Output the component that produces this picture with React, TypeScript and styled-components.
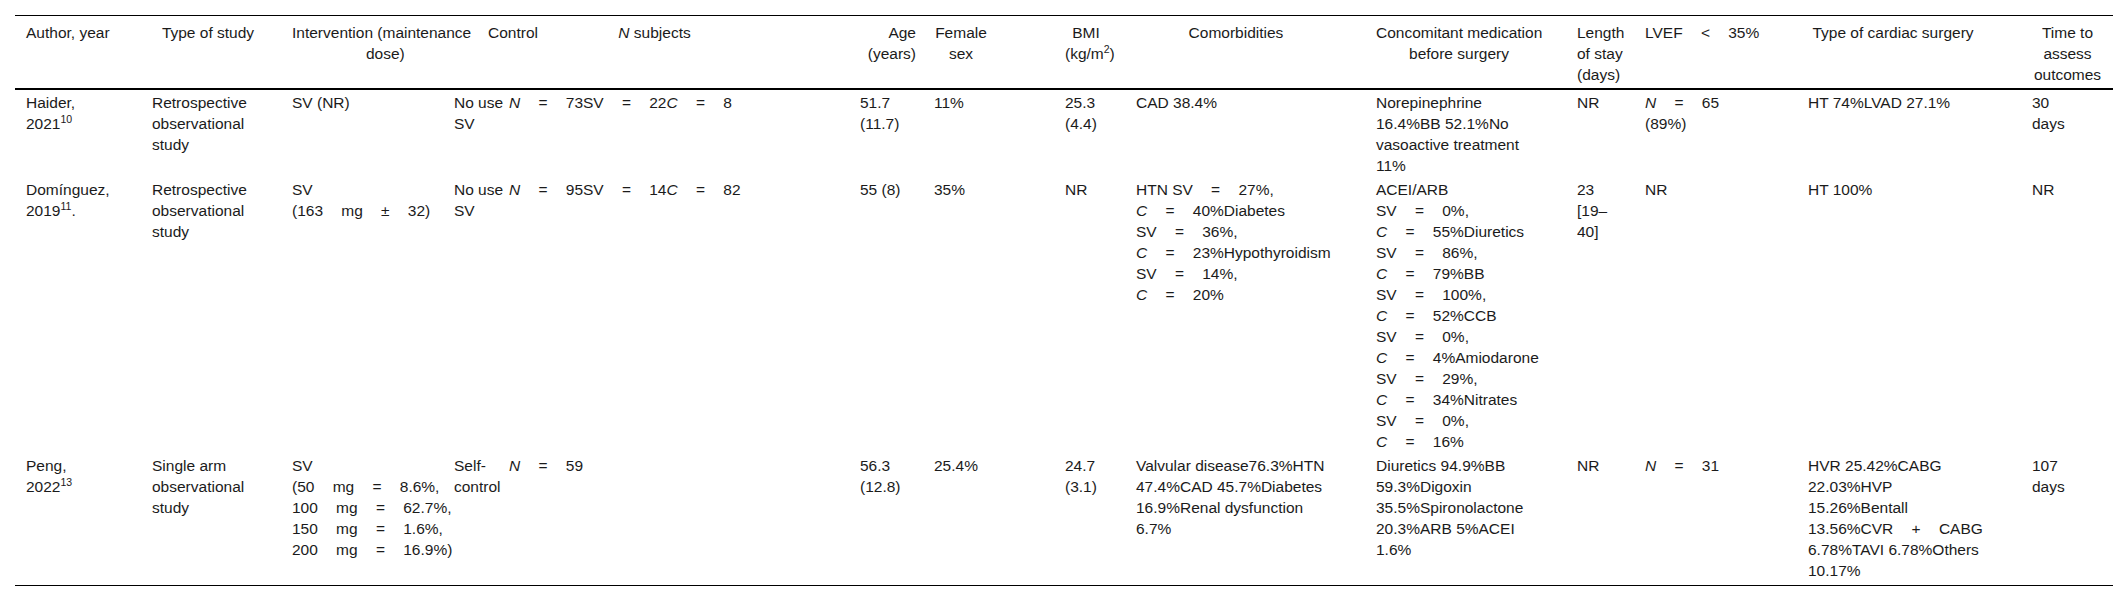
import styled, { createGlobalStyle } from 'styled-components';
import { ReactNode } from 'react';

type Align = 'left' | 'center' | 'right';

type Column = {
	width: number;
	align: Align;
	title: ReactNode;
	padLeft?: number;
	padRight?: number;
};

const GlobalStyle = createGlobalStyle`
	html, body {
		margin: 0;
		padding: 0;
		background: #ffffff;
	}

	body {
		font-family: "Liberation Sans", Arial, Helvetica, sans-serif;
		color: #1b1b1b;
	}
`;

const Page = styled.div`
	padding: 15px 0 0 15px;
`;

const Table = styled.table`
	border-collapse: collapse;
	table-layout: fixed;
	width: 2098px;
	font-size: 15.5px;
	line-height: 21px;
	border-top: 1px solid #000;
	border-bottom: 1px solid #000;
`;

const HeadRow = styled.tr`
	border-bottom: 2px solid #000;
`;

const Th = styled.th<{ $align: Align; $pl: number; $pr: number }>`
	font-weight: 400;
	text-align: ${(props) => props.$align};
	vertical-align: top;
	white-space: nowrap;
	padding: 6px ${(props) => props.$pr}px 3px ${(props) => props.$pl}px;
`;

const Td = styled.td<{ $last?: boolean }>`
	vertical-align: top;
	white-space: nowrap;
	padding: 2px 0 ${(props) => (props.$last ? '4px' : '1px')} 0;

	&:first-child {
		padding-left: 11px;
	}
`;

const V = styled.i`
	font-style: italic;
`;

// wide spacing around relations, like the math renderer in the source
const Math = styled.span`
	word-spacing: 0.9em;
`;

const Sup = styled.sup`
	font-size: 0.68em;
	line-height: 0;
	vertical-align: 0.55em;
`;

// second header line sits centred under a wider first line
const Indent = styled.span`
	padding-left: 74px;
`;

const columns: Column[] = [
	{ width: 137, align: 'left', title: 'Author, year', padLeft: 11 },
	{ width: 140, align: 'center', title: 'Type of study', padRight: 28 },
	{
		width: 162,
		align: 'left',
		title: (
			<>
				Intervention (maintenance
				<br />
				<Indent>dose)</Indent>
			</>
		)
	},
	{ width: 55, align: 'left', title: 'Control', padLeft: 34, padRight: 0 },
	{
		width: 351,
		align: 'center',
		padRight: 60,
		title: (
			<>
				<V>N</V> subjects
			</>
		)
	},
	{
		width: 74,
		align: 'right',
		padRight: 18,
		title: (
			<>
				Age
				<br />
				(years)
			</>
		)
	},
	{
		width: 131,
		align: 'center',
		padRight: 77,
		title: (
			<>
				Female
				<br />
				sex
			</>
		)
	},
	{
		width: 71,
		align: 'center',
		padRight: 29,
		title: (
			<>
				BMI
				<br />
				(kg/m<Sup>2</Sup>)
			</>
		)
	},
	{ width: 240, align: 'center', title: 'Comorbidities', padRight: 40 },
	{
		width: 201,
		align: 'center',
		padRight: 35,
		title: (
			<>
				Concomitant medication
				<br />
				before surgery
			</>
		)
	},
	{
		width: 68,
		align: 'left',
		title: (
			<>
				Length
				<br />
				of stay
				<br />
				(days)
			</>
		)
	},
	{
		width: 163,
		align: 'left',
		title: (
			<>
				LVEF<Math> &lt; </Math>35%
			</>
		)
	},
	{ width: 224, align: 'center', title: 'Type of cardiac surgery', padRight: 54 },
	{
		width: 81,
		align: 'center',
		title: (
			<>
				Time to
				<br />
				assess
				<br />
				outcomes
			</>
		)
	}
];

const lines = (...items: ReactNode[]) => (
	<>
		{items.map((item, i) => (
			<span key={i}>
				{i > 0 && <br />}
				{item}
			</span>
		))}
	</>
);

const rows: ReactNode[][] = [
	[
		lines('Haider,', <>2021<Sup>10</Sup></>),
		lines('Retrospective', 'observational', 'study'),
		'SV (NR)',
		lines('No use', 'SV'),
		<Math>
			<V>N</V> = 73SV = 22<V>C</V> = 8
		</Math>,
		lines('51.7', '(11.7)'),
		'11%',
		lines('25.3', '(4.4)'),
		'CAD 38.4%',
		lines('Norepinephrine', '16.4%BB 52.1%No', 'vasoactive treatment', '11%'),
		'NR',
		lines(
			<Math>
				<V>N</V> = 65
			</Math>,
			'(89%)'
		),
		'HT 74%LVAD 27.1%',
		lines('30', 'days')
	],
	[
		lines('Domínguez,', <>2019<Sup>11</Sup>.</>),
		lines('Retrospective', 'observational', 'study'),
		lines('SV', <Math>(163 mg ± 32)</Math>),
		lines('No use', 'SV'),
		<Math>
			<V>N</V> = 95SV = 14<V>C</V> = 82
		</Math>,
		'55 (8)',
		'35%',
		'NR',
		lines(
			<>
				HTN <Math>SV = 27%,</Math>
			</>,
			<Math>
				<V>C</V> = 40%Diabetes
			</Math>,
			<Math>SV = 36%,</Math>,
			<Math>
				<V>C</V> = 23%Hypothyroidism
			</Math>,
			<Math>SV = 14%,</Math>,
			<Math>
				<V>C</V> = 20%
			</Math>
		),
		lines(
			'ACEI/ARB',
			<Math>SV = 0%,</Math>,
			<Math>
				<V>C</V> = 55%Diuretics
			</Math>,
			<Math>SV = 86%,</Math>,
			<Math>
				<V>C</V> = 79%BB
			</Math>,
			<Math>SV = 100%,</Math>,
			<Math>
				<V>C</V> = 52%CCB
			</Math>,
			<Math>SV = 0%,</Math>,
			<Math>
				<V>C</V> = 4%Amiodarone
			</Math>,
			<Math>SV = 29%,</Math>,
			<Math>
				<V>C</V> = 34%Nitrates
			</Math>,
			<Math>SV = 0%,</Math>,
			<Math>
				<V>C</V> = 16%
			</Math>
		),
		lines('23', '[19–', '40]'),
		'NR',
		'HT 100%',
		'NR'
	],
	[
		lines('Peng,', <>2022<Sup>13</Sup></>),
		lines('Single arm', 'observational', 'study'),
		lines(
			'SV',
			<Math>(50 mg = 8.6%,</Math>,
			<Math>100 mg = 62.7%,</Math>,
			<Math>150 mg = 1.6%,</Math>,
			<Math>200 mg = 16.9%)</Math>
		),
		lines('Self-', 'control'),
		<Math>
			<V>N</V> = 59
		</Math>,
		lines('56.3', '(12.8)'),
		'25.4%',
		lines('24.7', '(3.1)'),
		lines(
			'Valvular disease76.3%HTN',
			'47.4%CAD 45.7%Diabetes',
			'16.9%Renal dysfunction',
			'6.7%'
		),
		lines(
			'Diuretics 94.9%BB',
			'59.3%Digoxin',
			'35.5%Spironolactone',
			'20.3%ARB 5%ACEI',
			'1.6%'
		),
		'NR',
		<Math>
			<V>N</V> = 31
		</Math>,
		lines(
			'HVR 25.42%CABG',
			'22.03%HVP',
			'15.26%Bentall',
			<>
				13.56%CVR<Math> + </Math>CABG
			</>,
			'6.78%TAVI 6.78%Others',
			'10.17%'
		),
		lines('107', 'days')
	]
];

const App = () => {
	return (
		<Page>
			<GlobalStyle />
			<Table>
				<colgroup>
					{columns.map((col, i) => (
						<col key={i} style={{ width: col.width }} />
					))}
				</colgroup>
				<thead>
					<HeadRow>
						{columns.map((col, i) => (
							<Th
								key={i}
								$align={col.align}
								$pl={col.padLeft ?? 0}
								$pr={col.padRight ?? 10}
							>
								{col.title}
							</Th>
						))}
					</HeadRow>
				</thead>
				<tbody>
					{rows.map((row, r) => (
						<tr key={r}>
							{row.map((cell, c) => (
								<Td key={c} $last={r === rows.length - 1}>
									{cell}
								</Td>
							))}
						</tr>
					))}
				</tbody>
			</Table>
		</Page>
	);
};

export default App;
